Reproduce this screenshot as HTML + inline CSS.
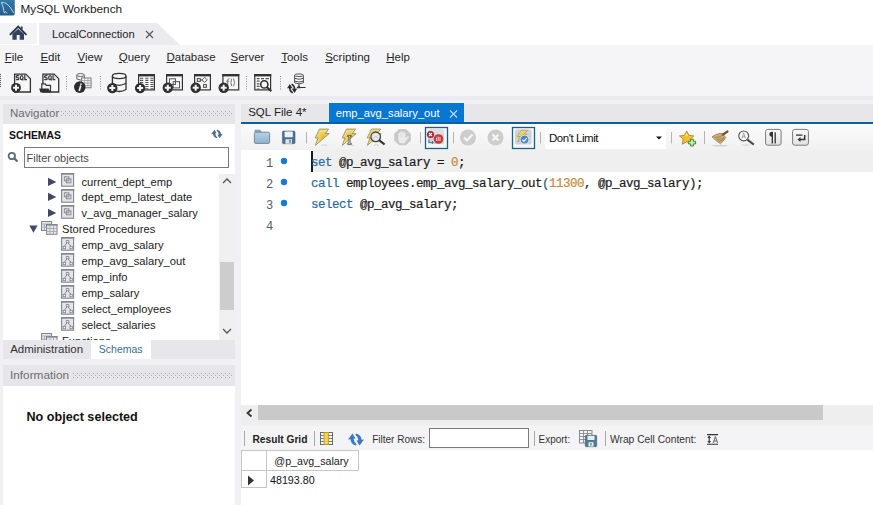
<!DOCTYPE html><html><head><meta charset="utf-8"><style>
html,body{margin:0;padding:0;width:873px;height:505px;overflow:hidden;background:#ececf0;position:relative}
body>*{position:absolute;display:block}
.t{line-height:1;white-space:pre;font-family:"Liberation Sans",sans-serif}
</style></head><body>
<div style="left:0px;top:0px;width:873px;height:45px;background:#ffffff"></div>
<div style="left:0px;top:45px;width:873px;height:51px;background:#f5f5f8"></div>
<div style="left:0px;top:96px;width:873px;height:4px;background:#ebebef"></div>
<div style="left:0px;top:100px;width:873px;height:405px;background:#f1f1f4"></div>
<svg style="left:0;top:0" width="16" height="17" viewBox="0 0 16 17"><defs><linearGradient id="dg" x1="0" y1="0" x2="0" y2="1"><stop offset="0" stop-color="#3479a8"/><stop offset="1" stop-color="#235c88"/></linearGradient></defs><path d="M0 0H14.8V13.4Q14.8 15.6 12.6 15.6H0Z" fill="url(#dg)"/><path d="M1.4 2.6Q3.5 2 6 3.3Q10 5.5 13.5 12.6M1.6 3Q2.8 5.5 3.3 8Q3.6 10.5 4.2 12.8Q5 13 5.2 11.5Q6 12.5 7 13" stroke="#b4d4ee" stroke-width="1" fill="none" stroke-linecap="round"/></svg>
<div class="t" style="left:20.5px;top:3.51px;font-size:11.8px;color:#1a1a1a">MySQL Workbench</div>
<svg style="left:0;top:23" width="200" height="22"><path d="M0 0H37V21H0Z" fill="#f4f4f7"/><path d="M39 0H157L180 22H39Z" fill="#ebebef"/></svg>
<svg style="left:0;top:20" width="40" height="25" viewBox="0 20 40 25"><path d="M10.6 34.2L18.2 26.6L25.8 34.2" stroke="#2a3550" stroke-width="1.9" fill="none" stroke-linecap="square"/><path d="M12.4 33.8L18.2 28.9L24 33.8V39.8H19.7V34.9H16.7V39.8H12.4Z" fill="#34415f"/><path d="M20.9 26.5H22.6V29.8L20.9 28.2Z" fill="#2a3550"/></svg>
<div class="t" style="left:52px;top:29.20px;font-size:11.1px;color:#222">LocalConnection</div>
<svg style="left:145;top:30" width="9" height="9"><path d="M1 1L8 8M8 1L1 8" stroke="#555" stroke-width="1.2"/></svg>
<div class="t" style="left:4.7px;top:51.87px;font-size:11.5px;color:#262626"><u>F</u>ile</div>
<div class="t" style="left:40.400000000000006px;top:51.87px;font-size:11.5px;color:#262626"><u>E</u>dit</div>
<div class="t" style="left:77.60000000000001px;top:51.87px;font-size:11.5px;color:#262626"><u>V</u>iew</div>
<div class="t" style="left:118.7px;top:51.87px;font-size:11.5px;color:#262626"><u>Q</u>uery</div>
<div class="t" style="left:166.5px;top:51.87px;font-size:11.5px;color:#262626"><u>D</u>atabase</div>
<div class="t" style="left:230.5px;top:51.87px;font-size:11.5px;color:#262626"><u>S</u>erver</div>
<div class="t" style="left:281.2px;top:51.87px;font-size:11.5px;color:#262626"><u>T</u>ools</div>
<div class="t" style="left:325.2px;top:51.87px;font-size:11.5px;color:#262626"><u>S</u>cripting</div>
<div class="t" style="left:386.2px;top:51.87px;font-size:11.5px;color:#262626"><u>H</u>elp</div>
<svg style="left:0;top:74" width="2" height="13"><line x1="0.5" y1="0" x2="0.5" y2="13" stroke="#555" stroke-dasharray="1 1"/></svg>
<svg style="left:66;top:76" width="2" height="15"><line x1="0.5" y1="0" x2="0.5" y2="15" stroke="#8a8a8a" stroke-dasharray="1 1.5"/></svg>
<svg style="left:100;top:76" width="2" height="15"><line x1="0.5" y1="0" x2="0.5" y2="15" stroke="#8a8a8a" stroke-dasharray="1 1.5"/></svg>
<svg style="left:246;top:76" width="2" height="15"><line x1="0.5" y1="0" x2="0.5" y2="15" stroke="#8a8a8a" stroke-dasharray="1 1.5"/></svg>
<svg style="left:280;top:76" width="2" height="15"><line x1="0.5" y1="0" x2="0.5" y2="15" stroke="#8a8a8a" stroke-dasharray="1 1.5"/></svg>
<svg style="left:0;top:68" width="320" height="30" viewBox="0 68 320 30"><path d="M14.6 74.1H25.8L30.4 78.7V92.0H14.6Z" fill="#f7f7f7" stroke="#333" stroke-width="1.3"/><path d="M25.8 75.0L29.5 78.7H25.8Z" fill="#e0e0e0"/><g transform="translate(0,0.0)" stroke="#3a3a3a" stroke-width="1.25" fill="none"><path d="M19.2 75.6H17.3Q16.2 75.6 16.2 76.7Q16.2 77.6 17.6 77.7Q18.9 77.8 18.9 78.8Q18.9 79.7 17.9 79.7H15.9"/><ellipse cx="21.7" cy="77.6" rx="1.35" ry="2.05"/><path d="M22.3 79.3L23.4 80.4"/><path d="M24.8 75V79.7H27"/></g><circle cx="16" cy="87.8" r="4.9" fill="#2e2e2e"/><path d="M13 87.8H19M16 84.8V90.8" stroke="#f4f4f4" stroke-width="2"/><path d="M42.9 74.1H54.099999999999994L58.699999999999996 78.7V92.0H42.9Z" fill="#f7f7f7" stroke="#333" stroke-width="1.3"/><path d="M54.099999999999994 75.0L57.8 78.7H54.099999999999994Z" fill="#e0e0e0"/><g transform="translate(28.299999999999997,0.0)" stroke="#3a3a3a" stroke-width="1.25" fill="none"><path d="M19.2 75.6H17.3Q16.2 75.6 16.2 76.7Q16.2 77.6 17.6 77.7Q18.9 77.8 18.9 78.8Q18.9 79.7 17.9 79.7H15.9"/><ellipse cx="21.7" cy="77.6" rx="1.35" ry="2.05"/><path d="M22.3 79.3L23.4 80.4"/><path d="M24.8 75V79.7H27"/></g><path d="M41.8 92V83.8H45.3L46.3 85.3H50.5V92" fill="#f7f7f7" stroke="#333" stroke-width="1.2"/><path d="M39.2 88.4H48.5L50.8 92.4H40.5Z" fill="#2e2e2e"/><path d="M76.8 75V79Q80.5 81 84.3 79V75" fill="#f4f4f4" stroke="#666" stroke-width="1"/><ellipse cx="80.5" cy="75" rx="3.8" ry="1.5" fill="#f4f4f4" stroke="#666" stroke-width="1"/><rect x="81.5" y="78" width="9.5" height="9.8" fill="#f7f7f7" stroke="#777" stroke-width="1"/><path d="M81.5 80.5H91M81.5 83H91M81.5 85.5H91M84.7 78V87.8M87.9 78V87.8" stroke="#9a9a9a" stroke-width="0.8"/><circle cx="79.8" cy="87.1" r="5.8" fill="#2e2e2e"/><circle cx="81" cy="84.1" r="0.95" fill="#f4f4f4"/><path d="M80.6 86.1L79.4 90.3" stroke="#f4f4f4" stroke-width="1.7" stroke-linecap="round"/><path d="M112.4 76V89.5Q119.2 93.5 126 89.5V76" fill="#f7f7f7" stroke="#333" stroke-width="1.3"/><ellipse cx="119.2" cy="76" rx="6.8" ry="2.6" fill="#f7f7f7" stroke="#333" stroke-width="1.3"/><path d="M112.4 83.3Q119.2 87.3 126 83.3" fill="none" stroke="#333" stroke-width="1.3"/><circle cx="112.3" cy="88.1" r="5.2" fill="#2e2e2e"/><path d="M109.3 88.1H115.3M112.3 85.1V91.1" stroke="#f4f4f4" stroke-width="2"/><rect x="138.6" y="74.6" width="15.8" height="15.3" fill="#f7f7f7" stroke="#333" stroke-width="1.2"/><rect x="138" y="74" width="17" height="2.4" fill="#333"/><path d="M140 78.30H143.2M145.3 78.30H148.4M150.4 78.30H153.5M140 80.37H143.2M145.3 80.37H148.4M150.4 80.37H153.5M140 82.44H143.2M145.3 82.44H148.4M150.4 82.44H153.5M140 84.51H143.2M145.3 84.51H148.4M150.4 84.51H153.5M140 86.58H143.2M145.3 86.58H148.4M150.4 86.58H153.5M140 88.65H143.2M145.3 88.65H148.4M150.4 88.65H153.5" stroke="#555" stroke-width="1.05"/><circle cx="140.1" cy="88.1" r="5.2" fill="#2e2e2e"/><path d="M137.1 88.1H143.1M140.1 85.1V91.1" stroke="#f4f4f4" stroke-width="2"/><rect x="166.6" y="74.6" width="15.8" height="15.3" fill="#f7f7f7" stroke="#333" stroke-width="1.2"/><rect x="166" y="74" width="17" height="2.4" fill="#333"/><rect x="169.5" y="78.8" width="6" height="5.6" fill="none" stroke="#555" stroke-width="1"/><rect x="173.2" y="81.6" width="6.3" height="6.3" fill="none" stroke="#555" stroke-width="1"/><circle cx="167.8" cy="87.7" r="5.2" fill="#2e2e2e"/><path d="M164.8 87.7H170.8M167.8 84.7V90.7" stroke="#f4f4f4" stroke-width="2"/><rect x="194.6" y="74.6" width="15.8" height="15.3" fill="#f7f7f7" stroke="#333" stroke-width="1.2"/><rect x="194" y="74" width="17" height="2.4" fill="#333"/><rect x="197.3" y="78.6" width="3" height="2.8" fill="none" stroke="#444" stroke-width="1"/><path d="M200.3 80H202.3" stroke="#444"/><path d="M204.6 77.3L207.2 79.9L204.6 82.5L202 79.9Z" fill="none" stroke="#444" stroke-width="0.9"/><rect x="203.6" y="84.6" width="2.8" height="2.7" fill="none" stroke="#444" stroke-width="1"/><circle cx="195.7" cy="87.7" r="5.2" fill="#2e2e2e"/><path d="M192.7 87.7H198.7M195.7 84.7V90.7" stroke="#f4f4f4" stroke-width="2"/><rect x="222.9" y="74.6" width="15.8" height="15.3" fill="#f7f7f7" stroke="#333" stroke-width="1.2"/><rect x="222.3" y="74" width="17" height="2.4" fill="#333"/><path d="M227.6 86.2V80.6Q227.6 78.5 229.6 78.6M226.2 81.2H229.2M231.8 78.6Q229.9 82.4 231.8 86.2M233.6 78.6Q235.5 82.4 233.6 86.2" stroke="#6a6a6a" stroke-width="0.9" fill="none"/><circle cx="223.7" cy="87.7" r="5.2" fill="#2e2e2e"/><path d="M220.7 87.7H226.7M223.7 84.7V90.7" stroke="#f4f4f4" stroke-width="2"/><rect x="254.79999999999998" y="74.6" width="15.8" height="15.3" fill="#f7f7f7" stroke="#333" stroke-width="1.2"/><rect x="254.2" y="74" width="17" height="2.4" fill="#333"/><path d="M256.8 78.6H259.5M261 78.6H264M265.5 78.6H269M256.8 81.2H259.5M256.8 83.8H259.5M256.8 86.4H259.5M256.8 89H259.5" stroke="#555" stroke-width="1.2"/><circle cx="264.3" cy="84.4" r="3.6" fill="#f7f7f7" stroke="#333" stroke-width="1.6"/><path d="M267 87.2L271.3 91.3" stroke="#333" stroke-width="2"/><path d="M294.6 75.2V82.8Q299 85 303.4 82.8V75.2" fill="#f7f7f7" stroke="#4a4a4a" stroke-width="0.95"/><ellipse cx="299" cy="75.2" rx="4.4" ry="1.3" fill="#f7f7f7" stroke="#4a4a4a" stroke-width="0.95"/><path d="M294.6 78.3Q299 80.2 303.4 78.3M294.6 81.1Q299 83 303.4 81.1" fill="none" stroke="#4a4a4a" stroke-width="0.95"/><path d="M299 84.3V87.5M297 87.5H305.6" stroke="#333" stroke-width="1.2"/><path d="M296.5 88.3Q296.8 86.2 299 86.2Q300.8 86.2 301 88.3Z" fill="#333"/><path d="M287 88.2L289.8 84L292.6 88.2Z" fill="#2e2e2e"/><path d="M289.8 87.5Q289.6 91.2 292.8 92.8" stroke="#2e2e2e" stroke-width="1.7" fill="none"/><path d="M291.8 88.8L294.5 93L297.2 88.8Z" fill="#2e2e2e"/><path d="M294.5 89.5Q294.8 85.8 291.6 84.2" stroke="#2e2e2e" stroke-width="1.7" fill="none"/></svg>
<div style="left:3px;top:103.5px;width:232px;height:20.5px;background:#e6e6ea"></div>
<div class="t" style="left:10px;top:107.77px;font-size:11.5px;color:#6d6d6d">Navigator</div>
<svg style="left:61;top:111" width="171" height="7"><defs><pattern id="dots" width="4" height="4" patternUnits="userSpaceOnUse"><rect x="0" y="0" width="1" height="1" fill="#a9a9b0"/><rect x="2" y="2" width="1" height="1" fill="#a9a9b0"/></pattern></defs><rect x="0" y="0" width="171" height="5" fill="url(#dots)"/></svg>
<div style="left:3px;top:124px;width:232px;height:216px;background:#ffffff"></div>
<div class="t" style="left:9px;top:131.00px;font-size:10.4px;color:#111;font-weight:bold">SCHEMAS</div>
<svg style="left:205;top:124" width="24" height="18" viewBox="205 124 24 18"><g transform="translate(217,134) scale(0.72) translate(-356,-439.5)"><path d="M348 439.5L352.5 433.5L355.5 438.5L353.5 438.8Q353.8 442 356.8 444.5L355.5 445.5Q350.5 443.5 350.5 439.2Z" fill="#4f6e8c"/><path d="M364 439.5L359.5 445.5L356.5 440.5L358.5 440.2Q358.2 437 355.2 434.5L356.5 433.5Q361.5 435.5 361.5 439.8Z" fill="#4f6e8c"/></g></svg>
<svg style="left:7;top:151" width="12" height="12"><circle cx="4.8" cy="5" r="3.2" stroke="#5e6b72" stroke-width="1.8" fill="none"/><path d="M7.2 7.4L10.5 10.5" stroke="#5e6b72" stroke-width="2.2"/></svg>
<div style="left:24px;top:147px;width:205px;height:21px;background:#fff;border:1px solid #7a7a7a;box-sizing:border-box"></div>
<div class="t" style="left:26.5px;top:153.19px;font-size:11px;color:#4a4a4a">Filter objects</div>
<svg style="left:48;top:176.5" width="10" height="10" viewBox="0 0 10 10"><path d="M0 0.8L8.3 4.9L0 9Z" fill="#3e4b66"/></svg>
<svg style="left:61;top:173.3" width="14" height="14" viewBox="0 0 14 14"><rect x="0.6" y="0.6" width="12" height="12.6" fill="#e3e5e9" stroke="#80858d" stroke-width="1.1"/><rect x="0" y="0" width="13.2" height="1.6" fill="#80858d"/><rect x="3.3" y="3.8" width="4.6" height="4" fill="none" stroke="#80858d" stroke-width="0.9"/><rect x="5.3" y="5.8" width="4.6" height="4" fill="none" stroke="#80858d" stroke-width="0.9"/></svg>
<div class="t" style="left:81.5px;top:176.82px;font-size:11.2px;color:#1a1a1a">current_dept_emp</div>
<svg style="left:48;top:192" width="10" height="10" viewBox="0 0 10 10"><path d="M0 0.8L8.3 4.9L0 9Z" fill="#3e4b66"/></svg>
<svg style="left:61;top:188.8" width="14" height="14" viewBox="0 0 14 14"><rect x="0.6" y="0.6" width="12" height="12.6" fill="#e3e5e9" stroke="#80858d" stroke-width="1.1"/><rect x="0" y="0" width="13.2" height="1.6" fill="#80858d"/><rect x="3.3" y="3.8" width="4.6" height="4" fill="none" stroke="#80858d" stroke-width="0.9"/><rect x="5.3" y="5.8" width="4.6" height="4" fill="none" stroke="#80858d" stroke-width="0.9"/></svg>
<div class="t" style="left:81.5px;top:192.32px;font-size:11.2px;color:#1a1a1a">dept_emp_latest_date</div>
<svg style="left:48;top:208" width="10" height="10" viewBox="0 0 10 10"><path d="M0 0.8L8.3 4.9L0 9Z" fill="#3e4b66"/></svg>
<svg style="left:61;top:204.8" width="14" height="14" viewBox="0 0 14 14"><rect x="0.6" y="0.6" width="12" height="12.6" fill="#e3e5e9" stroke="#80858d" stroke-width="1.1"/><rect x="0" y="0" width="13.2" height="1.6" fill="#80858d"/><rect x="3.3" y="3.8" width="4.6" height="4" fill="none" stroke="#80858d" stroke-width="0.9"/><rect x="5.3" y="5.8" width="4.6" height="4" fill="none" stroke="#80858d" stroke-width="0.9"/></svg>
<div class="t" style="left:81.5px;top:208.32px;font-size:11.2px;color:#1a1a1a">v_avg_manager_salary</div>
<svg style="left:28.5;top:225" width="10" height="9" viewBox="0 0 10 9"><path d="M0.3 0.5H8.6L4.45 7.8Z" fill="#3e4b66"/></svg>
<svg style="left:41;top:221.4" width="17" height="14" viewBox="0 0 17 14"><rect x="0.5" y="0.5" width="10" height="9" fill="#e3e5e9" stroke="#80858d"/><path d="M0.5 3H10.5M3.5 3V9.5M7 3V9.5M0.5 6.2H10.5" stroke="#a0a4aa" stroke-width="0.8"/><rect x="5.5" y="3.5" width="10.5" height="9.8" fill="#e3e5e9" stroke="#80858d"/><rect x="5" y="3" width="11.5" height="1.6" fill="#80858d"/><path d="M5.5 7.5H16M5.5 10.5H16M9 4.5V13M12.5 4.5V13" stroke="#a0a4aa" stroke-width="0.8"/></svg>
<div class="t" style="left:62px;top:224.32px;font-size:11.2px;color:#1a1a1a">Stored Procedures</div>
<svg style="left:61;top:237.2" width="14" height="14" viewBox="0 0 14 14"><rect x="0.6" y="0.6" width="12" height="12.6" fill="#e3e5e9" stroke="#80858d" stroke-width="1.1"/><rect x="0" y="0" width="13.2" height="1.6" fill="#80858d"/><path d="M6.6 5.3L3.3 9.3M6.6 5.3L9.9 9.3" stroke="#80858d" stroke-width="0.9"/><rect x="5.3" y="3.6" width="2.6" height="2.2" fill="#f4f4f6" stroke="#80858d" stroke-width="0.8"/><rect x="2.2" y="9.3" width="2.4" height="2.4" fill="#f4f4f6" stroke="#80858d" stroke-width="0.8"/><rect x="8.9" y="9.3" width="2.4" height="2.4" fill="#f4f4f6" stroke="#80858d" stroke-width="0.8"/></svg>
<div class="t" style="left:81.5px;top:240.32px;font-size:11.2px;color:#1a1a1a">emp_avg_salary</div>
<svg style="left:61;top:253.2" width="14" height="14" viewBox="0 0 14 14"><rect x="0.6" y="0.6" width="12" height="12.6" fill="#e3e5e9" stroke="#80858d" stroke-width="1.1"/><rect x="0" y="0" width="13.2" height="1.6" fill="#80858d"/><path d="M6.6 5.3L3.3 9.3M6.6 5.3L9.9 9.3" stroke="#80858d" stroke-width="0.9"/><rect x="5.3" y="3.6" width="2.6" height="2.2" fill="#f4f4f6" stroke="#80858d" stroke-width="0.8"/><rect x="2.2" y="9.3" width="2.4" height="2.4" fill="#f4f4f6" stroke="#80858d" stroke-width="0.8"/><rect x="8.9" y="9.3" width="2.4" height="2.4" fill="#f4f4f6" stroke="#80858d" stroke-width="0.8"/></svg>
<div class="t" style="left:81.5px;top:256.32px;font-size:11.2px;color:#1a1a1a">emp_avg_salary_out</div>
<svg style="left:61;top:269.2" width="14" height="14" viewBox="0 0 14 14"><rect x="0.6" y="0.6" width="12" height="12.6" fill="#e3e5e9" stroke="#80858d" stroke-width="1.1"/><rect x="0" y="0" width="13.2" height="1.6" fill="#80858d"/><path d="M6.6 5.3L3.3 9.3M6.6 5.3L9.9 9.3" stroke="#80858d" stroke-width="0.9"/><rect x="5.3" y="3.6" width="2.6" height="2.2" fill="#f4f4f6" stroke="#80858d" stroke-width="0.8"/><rect x="2.2" y="9.3" width="2.4" height="2.4" fill="#f4f4f6" stroke="#80858d" stroke-width="0.8"/><rect x="8.9" y="9.3" width="2.4" height="2.4" fill="#f4f4f6" stroke="#80858d" stroke-width="0.8"/></svg>
<div class="t" style="left:81.5px;top:272.32px;font-size:11.2px;color:#1a1a1a">emp_info</div>
<svg style="left:61;top:285.2" width="14" height="14" viewBox="0 0 14 14"><rect x="0.6" y="0.6" width="12" height="12.6" fill="#e3e5e9" stroke="#80858d" stroke-width="1.1"/><rect x="0" y="0" width="13.2" height="1.6" fill="#80858d"/><path d="M6.6 5.3L3.3 9.3M6.6 5.3L9.9 9.3" stroke="#80858d" stroke-width="0.9"/><rect x="5.3" y="3.6" width="2.6" height="2.2" fill="#f4f4f6" stroke="#80858d" stroke-width="0.8"/><rect x="2.2" y="9.3" width="2.4" height="2.4" fill="#f4f4f6" stroke="#80858d" stroke-width="0.8"/><rect x="8.9" y="9.3" width="2.4" height="2.4" fill="#f4f4f6" stroke="#80858d" stroke-width="0.8"/></svg>
<div class="t" style="left:81.5px;top:288.32px;font-size:11.2px;color:#1a1a1a">emp_salary</div>
<svg style="left:61;top:301.2" width="14" height="14" viewBox="0 0 14 14"><rect x="0.6" y="0.6" width="12" height="12.6" fill="#e3e5e9" stroke="#80858d" stroke-width="1.1"/><rect x="0" y="0" width="13.2" height="1.6" fill="#80858d"/><path d="M6.6 5.3L3.3 9.3M6.6 5.3L9.9 9.3" stroke="#80858d" stroke-width="0.9"/><rect x="5.3" y="3.6" width="2.6" height="2.2" fill="#f4f4f6" stroke="#80858d" stroke-width="0.8"/><rect x="2.2" y="9.3" width="2.4" height="2.4" fill="#f4f4f6" stroke="#80858d" stroke-width="0.8"/><rect x="8.9" y="9.3" width="2.4" height="2.4" fill="#f4f4f6" stroke="#80858d" stroke-width="0.8"/></svg>
<div class="t" style="left:81.5px;top:304.32px;font-size:11.2px;color:#1a1a1a">select_employees</div>
<svg style="left:61;top:317.2" width="14" height="14" viewBox="0 0 14 14"><rect x="0.6" y="0.6" width="12" height="12.6" fill="#e3e5e9" stroke="#80858d" stroke-width="1.1"/><rect x="0" y="0" width="13.2" height="1.6" fill="#80858d"/><path d="M6.6 5.3L3.3 9.3M6.6 5.3L9.9 9.3" stroke="#80858d" stroke-width="0.9"/><rect x="5.3" y="3.6" width="2.6" height="2.2" fill="#f4f4f6" stroke="#80858d" stroke-width="0.8"/><rect x="2.2" y="9.3" width="2.4" height="2.4" fill="#f4f4f6" stroke="#80858d" stroke-width="0.8"/><rect x="8.9" y="9.3" width="2.4" height="2.4" fill="#f4f4f6" stroke="#80858d" stroke-width="0.8"/></svg>
<div class="t" style="left:81.5px;top:320.32px;font-size:11.2px;color:#1a1a1a">select_salaries</div>
<svg style="left:41;top:333.4" width="17" height="14" viewBox="0 0 17 14"><rect x="0.5" y="0.5" width="10" height="9" fill="#e3e5e9" stroke="#80858d"/><path d="M0.5 3H10.5M3.5 3V9.5M7 3V9.5M0.5 6.2H10.5" stroke="#a0a4aa" stroke-width="0.8"/><rect x="5.5" y="3.5" width="10.5" height="9.8" fill="#e3e5e9" stroke="#80858d"/><rect x="5" y="3" width="11.5" height="1.6" fill="#80858d"/><path d="M5.5 7.5H16M5.5 10.5H16M9 4.5V13M12.5 4.5V13" stroke="#a0a4aa" stroke-width="0.8"/></svg>
<div class="t" style="left:62px;top:336.32px;font-size:11.2px;color:#1a1a1a">Functions</div>
<div style="left:219px;top:174px;width:16px;height:166px;background:#f0f0f0"></div>
<svg style="left:222;top:177" width="10" height="8"><path d="M1 6L5 2L9 6" stroke="#555" stroke-width="1.3" fill="none"/></svg>
<svg style="left:222;top:327" width="10" height="8"><path d="M1 2L5 6L9 2" stroke="#555" stroke-width="1.3" fill="none"/></svg>
<div style="left:219.5px;top:262px;width:14px;height:47.5px;background:#cdcdcd"></div>
<div style="left:3px;top:340px;width:232px;height:19px;background:#e6e6eb"></div>
<div class="t" style="left:10.2px;top:343.67px;font-size:11.5px;color:#333">Administration</div>
<div style="left:91px;top:340px;width:60px;height:19px;background:#ffffff"></div>
<div class="t" style="left:98.8px;top:344.01px;font-size:10.5px;color:#3d6b91">Schemas</div>
<div style="left:3px;top:365px;width:232px;height:21px;background:#e6e6ea"></div>
<div class="t" style="left:10px;top:370.01px;font-size:11.8px;color:#6d6d6d">Information</div>
<svg style="left:73;top:373" width="159" height="7"><rect x="0" y="0" width="159" height="5" fill="url(#dots)"/></svg>
<div style="left:3px;top:386px;width:232px;height:119px;background:#ffffff"></div>
<div class="t" style="left:26.5px;top:410.83px;font-size:12.6px;color:#111;font-weight:bold">No object selected</div>
<div style="left:241px;top:103.5px;width:632px;height:18.5px;background:#e7e7ea"></div>
<div class="t" style="left:248.2px;top:106.87px;font-size:11.5px;color:#222">SQL File 4*</div>
<div style="left:329px;top:103px;width:135px;height:19px;background:#0877d2"></div>
<div class="t" style="left:335.8px;top:107.62px;font-size:11.2px;color:#ffffff">emp_avg_salary_out</div>
<svg style="left:449;top:110" width="9" height="8"><path d="M1 0.5L8 7.5M8 0.5L1 7.5" stroke="#c5dcf0" stroke-width="1.1"/></svg>
<div style="left:241px;top:122px;width:632px;height:2px;background:#0f5e9e"></div>
<div style="left:241px;top:124px;width:632px;height:26px;background:linear-gradient(#fbfbfb,#f1f1f1)"></div>
<svg style="left:241;top:124" width="632" height="26" viewBox="241 124 632 26"><defs><linearGradient id="fold" x1="0" y1="0" x2="0" y2="1"><stop offset="0" stop-color="#b8d2e6"/><stop offset="1" stop-color="#8fb2cc"/></linearGradient><radialGradient id="bolt" cx="0.55" cy="0.5" r="0.6"><stop offset="0" stop-color="#e6bd28"/><stop offset="0.6" stop-color="#efd870"/><stop offset="1" stop-color="#f6eab0"/></radialGradient></defs><path d="M255 130.2H259.8Q260.7 130.2 260.9 131.2L261.1 132.3H255Z" fill="#8fb0c8" stroke="#6f8fa8" stroke-width="0.8"/><rect x="254.4" y="132.2" width="15.2" height="11.2" rx="1.2" fill="url(#fold)" stroke="#6d8ca6" stroke-width="1"/><rect x="282.4" y="131.1" width="12.6" height="12.6" rx="1.2" fill="#50708f" stroke="#425e7a" stroke-width="0.6"/><rect x="284.6" y="131.4" width="8.2" height="5.8" rx="0.8" fill="#eaf2f8"/><rect x="285.4" y="139.3" width="6.6" height="4.4" fill="#dbe6ee"/><rect x="289.3" y="140" width="1.4" height="2.8" fill="#50708f"/><path d="M306.5 132V143.5" stroke="#b5b5b5"/><path d="M321.5 145.6Q324 144.2 327 145.6" stroke="#d8d8d8" stroke-width="1.2" fill="none"/><path d="M319.5 129.1H328.6L325.2 133.6H329.2L315.4 145.3L318 137.9H315.2Z" fill="url(#bolt)" stroke="#8f8042" stroke-width="0.8" stroke-linejoin="round"/><path d="M348.5 145.6Q351 144.2 354 145.6" stroke="#d8d8d8" stroke-width="1.2" fill="none"/><path d="M346.5 129.1H355.6L352.2 133.6H356.2L342.4 145.3L345 137.9H342.2Z" fill="url(#bolt)" stroke="#8f8042" stroke-width="0.8" stroke-linejoin="round"/><path d="M347.6 135.4H351.4V136.5H350.1V143.3H351.4V144.4H347.6V143.3H348.9V136.5H347.6Z" fill="#fafafa" stroke="#3a3a4a" stroke-width="0.7"/><path d="M373.5 145.6Q376 144.2 379 145.6" stroke="#d8d8d8" stroke-width="1.2" fill="none"/><path d="M371.5 129.1H380.6L377.2 133.6H381.2L367.4 145.3L370 137.9H367.2Z" fill="url(#bolt)" stroke="#8f8042" stroke-width="0.8" stroke-linejoin="round"/><circle cx="375.7" cy="136.8" r="4.8" fill="#e4e8e6" stroke="#444" stroke-width="1.3"/><path d="M373.5 138.5Q375.7 134 378 138.5" stroke="#c0c8c4" stroke-width="0.8" fill="none"/><path d="M379.3 140.3L384.6 144.5" stroke="#333" stroke-width="2.2"/><path d="M399.1 128.9H406L410.9 133.8V140.4L406 145.3H399.1L394.2 140.4V133.8Z" fill="#c9c9c9"/><path d="M399.2 138.5V133.6M401 137.5V132.2M402.8 137.5V132.2M404.6 138V133.4M405.6 140.2L407.9 137" stroke="#ebebeb" stroke-width="1.6" stroke-linecap="round"/><path d="M398.4 137.5H406.2V140Q405.5 143.4 402.3 143.4Q398.4 143.4 398.4 140Z" fill="#ebebeb"/><path d="M420.5 132V143.5" stroke="#b5b5b5"/><rect x="425.5" y="127.5" width="22" height="21" fill="#f3f5f7" stroke="#21607f" stroke-width="1.3"/><rect x="428" y="129.5" width="16" height="14.5" rx="2.5" fill="#cfd1d4"/><rect x="428" y="129.5" width="16" height="5" rx="2" fill="#dcdee0"/><path d="M429 139.5V142.5H433" stroke="#4a78b0" stroke-width="1.1" fill="none"/><path d="M432 141L433.5 142.5L432 144" stroke="#4a78b0" stroke-width="1" fill="none"/><circle cx="438.5" cy="139" r="4.8" fill="#c8383c"/><path d="M436.5 141V137.5M438.2 141V136.5M440 141V137" stroke="#f6d0d0" stroke-width="1"/><circle cx="430.5" cy="134.5" r="3.6" fill="#a82a30"/><path d="M429 133L432 136M432 133L429 136" stroke="#fff" stroke-width="1.1"/><path d="M453.5 132V143.5" stroke="#b5b5b5"/><circle cx="468" cy="137.5" r="8" fill="#cdcdcd"/><path d="M464 137.5L467 140.5L472.5 134.5" stroke="#f5f5f5" stroke-width="2.2" fill="none"/><circle cx="495.5" cy="137.5" r="8" fill="#cdcdcd"/><path d="M492.5 134.5L498.5 140.5M498.5 134.5L492.5 140.5" stroke="#f5f5f5" stroke-width="2.2"/><rect x="512.5" y="127.5" width="22" height="21" fill="#f3f5f7" stroke="#21607f" stroke-width="1.3"/><rect x="515" y="129.5" width="16.5" height="15" rx="2.5" fill="#cfd1d4"/><g transform="translate(517,130) scale(0.72)"><path d="M6 0.5H14.5L9.5 6H13.5L1 16.5L4.5 9H0.5Z" fill="url(#bolt)" stroke="#9c8a3a" stroke-width="0.9"/></g><circle cx="524.5" cy="139.6" r="4.4" fill="#4a86cc" stroke="#e8f0f8" stroke-width="0.8"/><path d="M522.3 139.6L524 141.3L526.8 138.2" stroke="#fff" stroke-width="1.2" fill="none"/><path d="M540.5 132V143.5" stroke="#b5b5b5"/><rect x="545" y="127" width="121" height="22" fill="#ffffff"/><path d="M656 136.5H662L659 139.5Z" fill="#111"/><path d="M671.5 132V143.5" stroke="#b5b5b5"/><path d="M686.7 130.9L688.9 135.3L693.9 135.9L690.3 139.2L691.2 144.3L686.7 141.8L682.2 144.3L683.1 139.2L679.5 135.9L684.5 135.3Z" fill="#edbd35" stroke="#a88421" stroke-width="0.8" stroke-linejoin="round"/><path d="M684.5 136.5L686.7 132.5L688 136" fill="#f8dc78" stroke="none"/><path d="M690.6 139.3H693.4V141.3H695.6V143.9H693.4V146H690.6V143.9H688.4V141.3H690.6Z" fill="#c6eeb0" stroke="#3f8a2c" stroke-width="1"/><path d="M704.5 131V144" stroke="#b5b5b5"/><ellipse cx="720" cy="145.7" rx="8" ry="0.9" fill="#d2d2d2"/><path d="M712 136.8Q716 133.5 722 133.2L725.8 137.5Q723.5 141.5 720.4 143.8Q715.5 140.5 712 136.8Z" fill="#cfae78" stroke="#8f7448" stroke-width="0.7"/><path d="M714.5 137.2Q719 138 722.8 135.2M716.3 139.3Q720.5 139.8 724 137.5M718.3 141.3Q721.5 141 724.5 139.2" stroke="#9a7a48" stroke-width="0.8" fill="none"/><path d="M723 134.5L727.5 131.5" stroke="#6e5836" stroke-width="2.2" stroke-linecap="round"/><circle cx="743.7" cy="135.9" r="4.9" fill="#fbfbfb" stroke="#555" stroke-width="1.2"/><path d="M741.8 138.6L743.7 132.8L745.6 138.6M742.5 136.9H744.9" stroke="#8a8a8a" stroke-width="0.8" fill="none"/><path d="M747.4 139.6L753.8 144.6" stroke="#4a4a4a" stroke-width="2"/><ellipse cx="746" cy="145" rx="5" ry="0.7" fill="#dcdcdc"/><defs><linearGradient id="btn" x1="0" y1="0" x2="0" y2="1"><stop offset="0" stop-color="#fafafa"/><stop offset="1" stop-color="#e2e2e2"/></linearGradient></defs><rect x="765.6" y="129.4" width="15.5" height="15.8" rx="2.2" fill="url(#btn)" stroke="#7a7a7a" stroke-width="1"/><path d="M772.3 132.3V143.6M775.2 132.3V143.6" stroke="#333" stroke-width="1.3"/><path d="M776 131.8H771.6Q769.3 132 769.3 134.3Q769.3 136.6 771.6 136.8H772.9V131.8Z" fill="#333"/><rect x="792.6" y="129.4" width="15.8" height="15.8" rx="2.2" fill="url(#btn)" stroke="#7a7a7a" stroke-width="1"/><path d="M796 135.1H802.4" stroke="#444" stroke-width="1.4"/><path d="M804.7 135V139.5H799" stroke="#333" stroke-width="1.5" fill="none"/><path d="M797.5 139.5L800.5 137V142Z" fill="#333"/></svg>
<div class="t" style="left:549px;top:132.57px;font-size:11.5px;color:#111;letter-spacing:-0.45px">Don't Limit</div>
<div style="left:241px;top:150px;width:632px;height:255px;background:#ffffff"></div>
<div style="left:313px;top:150px;width:560px;height:22px;background:#efefef"></div>
<div style="left:311px;top:151px;width:2px;height:21px;background:#1a1a1a"></div>
<div class="t" style="left:266px;top:157.80px;font-size:12px;font-family:'Liberation Mono',monospace;color:#4e5e6e">1</div>
<svg style="left:280;top:157" width="8" height="8"><circle cx="4" cy="4" r="3.2" fill="#1a7ad2"/></svg>
<div class="t" style="left:266px;top:178.80px;font-size:12px;font-family:'Liberation Mono',monospace;color:#4e5e6e">2</div>
<svg style="left:280;top:178" width="8" height="8"><circle cx="4" cy="4" r="3.2" fill="#1a7ad2"/></svg>
<div class="t" style="left:266px;top:199.80px;font-size:12px;font-family:'Liberation Mono',monospace;color:#4e5e6e">3</div>
<svg style="left:280;top:199" width="8" height="8"><circle cx="4" cy="4" r="3.2" fill="#1a7ad2"/></svg>
<div class="t" style="left:266px;top:220.80px;font-size:12px;font-family:'Liberation Mono',monospace;color:#4e5e6e">4</div>
<div class="t" style="left:311px;top:156.72px;font-size:12.5px;font-family:'Liberation Mono',monospace;color:#1a1a1a;letter-spacing:-0.5px;-webkit-text-stroke:0.2px"><span style="color:#266b9e">set</span> @p_avg_salary = <span style="color:#c7893a">0</span>;</div>
<div class="t" style="left:311px;top:177.72px;font-size:12.5px;font-family:'Liberation Mono',monospace;color:#1a1a1a;letter-spacing:-0.5px;-webkit-text-stroke:0.2px"><span style="color:#266b9e">call</span> employees.emp_avg_salary_out<span style="color:#2a5a6a">(</span><span style="color:#c7893a">11300</span>, @p_avg_salary);</div>
<div class="t" style="left:311px;top:198.72px;font-size:12.5px;font-family:'Liberation Mono',monospace;color:#1a1a1a;letter-spacing:-0.5px;-webkit-text-stroke:0.2px"><span style="color:#266b9e">select</span> @p_avg_salary;</div>
<div style="left:241px;top:405px;width:632px;height:20px;background:#eeeeee"></div>
<svg style="left:245;top:408" width="9" height="10"><path d="M6.5 1.5L2.5 5L6.5 8.5" stroke="#333" stroke-width="1.8" fill="none"/></svg>
<div style="left:258px;top:405px;width:565px;height:15px;background:#c9c9c9"></div>
<div style="left:241px;top:425.5px;width:632px;height:24.5px;background:#f4f4f6"></div>
<div style="left:244px;top:431px;width:1px;height:15px;background:#a8a8a8"></div>
<div style="left:313.5px;top:431px;width:1px;height:15px;background:#a8a8a8"></div>
<div style="left:533.5px;top:431px;width:1px;height:15px;background:#a8a8a8"></div>
<div style="left:605px;top:431px;width:1px;height:15px;background:#a8a8a8"></div>
<div class="t" style="left:252.5px;top:435.17px;font-size:10.2px;color:#222;font-weight:bold">Result Grid</div>
<svg style="left:241;top:427" width="632" height="23" viewBox="241 427 632 23"><rect x="320.5" y="432.5" width="12" height="12" fill="#f8f8f8" stroke="#6a6a6a"/><path d="M320.5 435.5H332.5M320.5 438.5H332.5M320.5 441.5H332.5" stroke="#6a6a6a" stroke-width="0.9"/><rect x="324" y="432.5" width="4.6" height="12" fill="#f2d24a" stroke="#b89a2a" stroke-width="0.8"/><path d="M348 439.5L352.5 433.5L355.5 438.5L353.5 438.8Q353.8 442 356.8 444.5L355.5 445.5Q350.5 443.5 350.5 439.2Z" fill="#3a78c8"/><path d="M364 439.5L359.5 445.5L356.5 440.5L358.5 440.2Q358.2 437 355.2 434.5L356.5 433.5Q361.5 435.5 361.5 439.8Z" fill="#3f74c0"/><rect x="429.5" y="428.5" width="99" height="19" fill="#fff" stroke="#7a7a7a"/><rect x="579.5" y="430.5" width="12.5" height="12.5" fill="#f4f4f4" stroke="#8a8a8a"/><path d="M579.5 433.5H592M579.5 436.5H592M579.5 439.5H592M583.5 430.5V443M587.5 430.5V443" stroke="#8a8a8a" stroke-width="0.9"/><rect x="585.3" y="435.3" width="11.4" height="11.4" rx="1" fill="#4d7c8c" stroke="#3a6070" stroke-width="0.6"/><rect x="587.5" y="435.8" width="7" height="4.2" fill="#e8eef2"/><rect x="588.5" y="442.2" width="5" height="4.3" fill="#e8eef2"/><rect x="590.3" y="443" width="1.3" height="2.5" fill="#4d7c8c"/><path d="M707 434.6H718M707 444.3H718" stroke="#333" stroke-width="1.1"/><path d="M709.2 436.5V442.5" stroke="#333" stroke-width="1.1"/><path d="M707.4 438L709.2 435.4L711 438ZM707.4 441L709.2 443.6L711 441Z" fill="#333"/><path d="M713.2 443L715.4 436.5L717.6 443M714 441H716.8" stroke="#555" stroke-width="0.9" fill="none"/></svg>
<div class="t" style="left:372.2px;top:435.34px;font-size:10px;color:#333">Filter Rows:</div>
<div class="t" style="left:538.5px;top:435.34px;font-size:10px;color:#333">Export:</div>
<div class="t" style="left:610px;top:435.12px;font-size:10.25px;color:#333">Wrap Cell Content:</div>
<div style="left:241px;top:450px;width:632px;height:55px;background:#ffffff"></div>
<div style="left:241px;top:450px;width:118px;height:1px;background:#c6c6c6"></div>
<div style="left:241px;top:450px;width:1px;height:38px;background:#c6c6c6"></div>
<div style="left:266px;top:450px;width:1px;height:38px;background:#c6c6c6"></div>
<div style="left:358px;top:450px;width:1px;height:21px;background:#c6c6c6"></div>
<div style="left:241px;top:470px;width:118px;height:1px;background:#c6c6c6"></div>
<div style="left:241px;top:487px;width:26px;height:1px;background:#c6c6c6"></div>
<div class="t" style="left:274.3px;top:455.84px;font-size:10.7px;color:#222">@p_avg_salary</div>
<div class="t" style="left:270px;top:475.44px;font-size:10.7px;color:#111">48193.80</div>
<svg style="left:247;top:475" width="8" height="11"><path d="M1 0.5L7 5.5L1 10.5Z" fill="#333"/></svg>
</body></html>
